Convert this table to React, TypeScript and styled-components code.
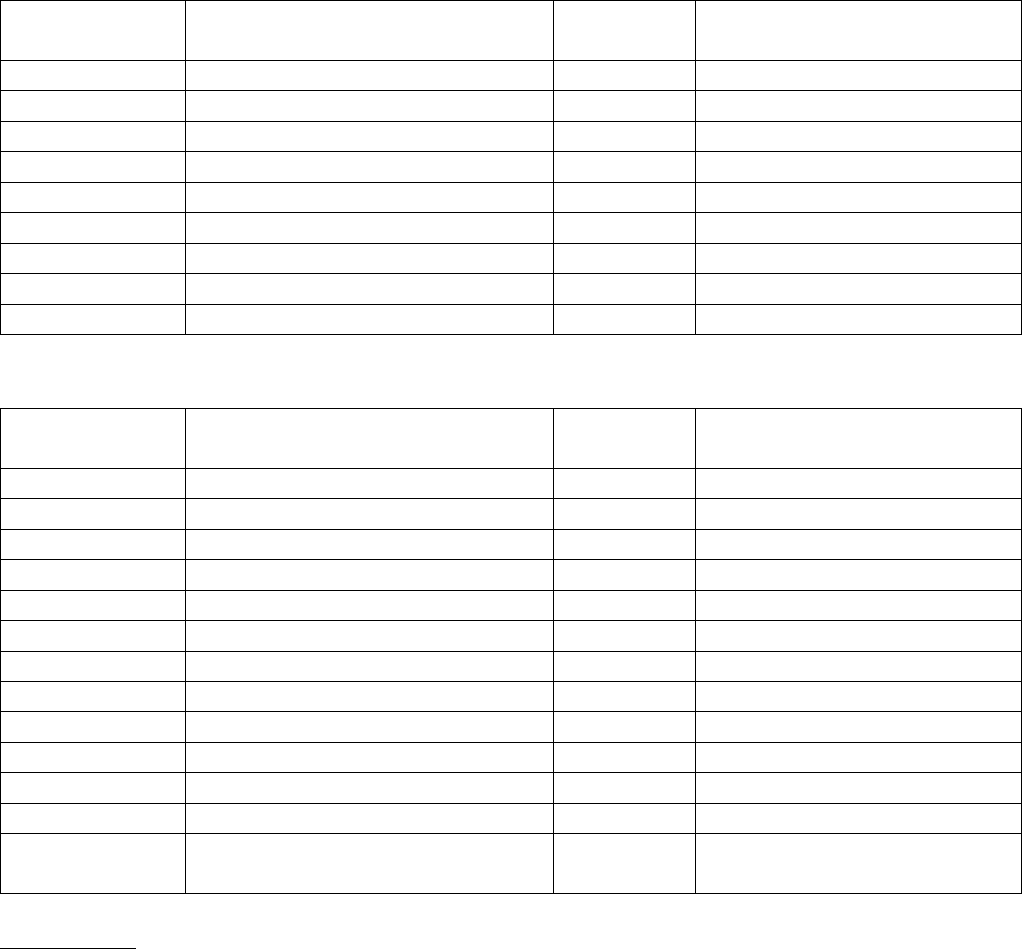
import styled, { createGlobalStyle } from "styled-components";

const GlobalStyle = createGlobalStyle`
  html, body {
    margin: 0;
    padding: 0;
    background: #ffffff;
    font-family: "Liberation Serif", "Times New Roman", serif;
    font-size: 16px;
  }
`;

const Page = styled.div`
  width: 1022px;
  display: flex;
  flex-direction: column;
`;

const Grid = styled.table<{ $gap?: number }>`
  width: 1021px;
  border-collapse: collapse;
  table-layout: fixed;
  margin-top: ${(p) => p.$gap ?? 0}px;
`;

const Cell = styled.td<{ $tall?: boolean }>`
  border: 1px solid #000;
  height: ${(p) => (p.$tall ? 60 : 30.45)}px;
  padding: 0;
  box-sizing: border-box;
`;

const FootRule = styled.hr`
  width: 136px;
  margin: 54px 0 0 0;
  border: none;
  border-top: 1px solid #000;
  height: 0;
  align-self: flex-start;
`;

const widths = [185, 368, 142, 326];

function Table({ rows, gap, tallLast }: { rows: number; gap?: number; tallLast?: boolean }) {
  return (
    <Grid $gap={gap}>
      <colgroup>
        {widths.map((w, i) => (
          <col key={i} style={{ width: w }} />
        ))}
      </colgroup>
      <tbody>
        <tr>
          {widths.map((_, i) => (
            <Cell key={i} $tall />
          ))}
        </tr>
        {Array.from({ length: rows }).map((_, r) => (
          <tr key={r}>
            {widths.map((_, i) => (
              <Cell key={i} $tall={tallLast && r === rows - 1} />
            ))}
          </tr>
        ))}
      </tbody>
    </Grid>
  );
}

export default function App() {
  return (
    <>
      <GlobalStyle />
      <Page>
        <Table rows={9} />
        <Table rows={13} gap={73} tallLast />
        <FootRule />
      </Page>
    </>
  );
}
